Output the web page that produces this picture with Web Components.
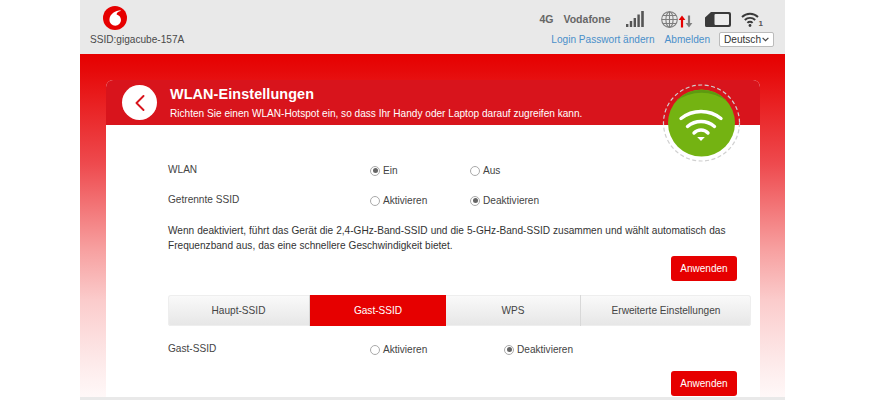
<!DOCTYPE html>
<html lang="de">
<head>
<meta charset="utf-8">
<title>WLAN-Einstellungen</title>
<style>
html,body{margin:0;height:400px;overflow:hidden;background:#fff}
body{font-family:"Liberation Sans",Arial,sans-serif;color:#444}
</style>
</head>
<body>
<gc-page>
  <gc-topbar slot="top" ssid="SSID:gigacube-157A"></gc-topbar>
  <gc-panel title-text="WLAN-Einstellungen" sub-text="Richten Sie einen WLAN-Hotspot ein, so dass Ihr Handy oder Laptop darauf zugreifen kann.">
    <gc-row label="WLAN" style="--row-h:30px">
      <gc-radio checked>Ein</gc-radio>
      <gc-radio>Aus</gc-radio>
    </gc-row>
    <gc-row label="Getrennte SSID" style="--row-h:30px">
      <gc-radio>Aktivieren</gc-radio>
      <gc-radio checked>Deaktivieren</gc-radio>
    </gc-row>
    <gc-note>Wenn deaktiviert, führt das Gerät die 2,4-GHz-Band-SSID und die 5-GHz-Band-SSID zusammen und wählt automatisch das Frequenzband aus, das eine schnellere Geschwindigkeit bietet.</gc-note>
    <gc-apply style="margin-top:3px">Anwenden</gc-apply>
    <gc-tabs style="margin-top:14px"></gc-tabs>
    <gc-row label="Gast-SSID" style="--row-h:29px;--col:134px;margin-top:16px">
      <gc-radio>Aktivieren</gc-radio>
      <gc-radio checked>Deaktivieren</gc-radio>
    </gc-row>
    <gc-apply>Anwenden</gc-apply>
  </gc-panel>
</gc-page>

<script>
class GcPage extends HTMLElement {
    connectedCallback() {
        this.attachShadow({ mode: 'open' });
        this.shadowRoot.innerHTML = `
            <style>
                :host{display:block;width:705px;margin-left:80px;height:400px;overflow:hidden;background:#e9e9e9}
                .body{height:343px;padding:26px 25px 0 26px;box-sizing:border-box;overflow:hidden;
                    background:linear-gradient(#e60000 0,#e60a0a 5%,#ee4a4e 32%,#f7a0a0 57%,#fbcccc 72%,#fdeaea 90%,#fff8f8 100%)}
            </style>
            <slot name="top"></slot>
            <div class="body"><slot></slot></div>
        `;
    }
}
customElements.define('gc-page', GcPage);

class GcTopbar extends HTMLElement {
    connectedCallback() {
        this.attachShadow({ mode: 'open' });
        this.shadowRoot.innerHTML = `
            <style>
                :host{display:flex;justify-content:space-between;height:54px;font-size:10px;color:#555;box-sizing:border-box}
                .brand{display:flex;flex-direction:column;align-items:flex-start;padding:6px 0 0 10px}
                .brand svg{margin-left:13px;display:block}
                .ssid{margin-top:3px;font-size:10.1px;line-height:13px;color:#4a4a4a}
                .right{display:flex;flex-direction:column;align-items:flex-end;padding:9px 11px 0 0}
                .status{display:flex;align-items:center;height:20px;padding-right:12px;font-weight:bold;color:#666;font-size:10.5px}
                .status svg{display:block}
                .one{font-size:8px;color:#555;align-self:flex-end;margin:0 -1px 0 0;line-height:8px;padding-bottom:1px}
                .links{display:flex;align-items:center;margin-top:3px;color:#4a8fc9;font-size:10.1px}
                .select{display:flex;align-items:center;justify-content:space-between;margin-left:9px;width:55px;height:15px;box-sizing:border-box;border:1px solid #bbb;border-radius:2px;background:#fff;color:#333;padding:0 4px}
            </style>
            <div class="brand">
                <svg width="24" height="24" viewBox="0 0 24 24">
                    <circle cx="12" cy="12" r="12" fill="#e60000"/>
                    <path d="M17.6 4.2C13 4.400 6.400 7.600 6.400 14a5.800 5.800 0 0 0 11.600 0c0-3.200-2.200-5-4.400-5.600 0-1.600 1.700-3 4-3.400z" fill="#fff"/>
                </svg>
                <div class="ssid">${this.getAttribute('ssid')}</div>
            </div>
            <div class="right">
                <div class="status">
                    <span>4G</span><span style="margin-left:10px">Vodafone</span>
                    <svg style="margin-left:15px" width="18" height="18" viewBox="0 0 18 18" fill="#555">
                        <rect x="0" y="14" width="2.4" height="3"/><rect x="3.8" y="11" width="2.4" height="6"/><rect x="7.6" y="8" width="2.4" height="9"/><rect x="11.4" y="4.5" width="2.4" height="12.5"/><rect x="15.2" y="1" width="2.6" height="16"/>
                    </svg>
                    <svg style="margin-left:17px" width="17" height="17" viewBox="0 0 17 17" fill="none" stroke="#7d7d7d" stroke-width="1.1">
                        <circle cx="8.5" cy="8.5" r="7.8"/><ellipse cx="8.5" cy="8.5" rx="3.6" ry="7.8"/><path d="M8.5.8v15.4M.8 8.500h15.400M2 4.500h13M2 12.500h13"/>
                    </svg>
                    <svg style="margin-left:0;margin-top:5px" width="15" height="13" viewBox="0 0 15 13">
                        <path d="M4 12.5V4" stroke="#e60000" stroke-width="2.2"/><path d="M.6 5 4 .5 7.4 5z" fill="#e60000"/>
                        <path d="M11 .5V9" stroke="#808080" stroke-width="2.2"/><path d="M7.600 8 11 12.500 14.400 8z" fill="#808080"/>
                    </svg>
                    <svg style="margin-left:12px" width="26" height="15" viewBox="0 0 26 15">
                        <path d="M6 0H24a2 2 0 0 1 2 2V13a2 2 0 0 1-2 2H1.500A1.500 1.500 0 0 1 0 13.500V5.500z" fill="#3a3a3a"/>
                        <rect x="9.5" y="2" width="14.5" height="11" rx="1" fill="#ececec"/>
                    </svg>
                    <svg style="margin-left:10px" width="18" height="15" viewBox="0 0 18 15" fill="none" stroke="#3a3a3a" stroke-width="1.9">
                        <path d="M1 5a11.500 11.500 0 0 1 16 0M3.800 8a7.500 7.500 0 0 1 10.400 0M6.400 10.800a3.600 3.600 0 0 1 5.200 0"/>
                        <circle cx="9" cy="13.5" r="1.4" fill="#3a3a3a" stroke="none"/>
                    </svg>
                    <span class="one">1</span>
                </div>
                <div class="links">
                    <span>Login Passwort ändern</span><span style="margin-left:10px">Abmelden</span>
                    <div class="select"><span>Deutsch</span>
                        <svg width="7" height="5" viewBox="0 0 7 5" fill="none" stroke="#444" stroke-width="1.2"><path d="M.6.8 3.500 3.700 6.400.8"/></svg>
                    </div>
                </div>
            </div>
        `;
    }
}
customElements.define('gc-topbar', GcTopbar);

class GcPanel extends HTMLElement {
    connectedCallback() {
        this.attachShadow({ mode: 'open' });
        this.shadowRoot.innerHTML = `
            <style>
                :host{display:block;position:relative;height:317px;background:#fff;border-radius:7px 7px 0 0}
                .head{display:flex;align-items:center;height:45px;padding-left:16px;background:#d8141c;border-radius:7px 7px 0 0;color:#fff}
                .back{flex:none;width:35px;height:35px;border-radius:50%;background:#fff;display:flex;align-items:center;justify-content:center}
                .txt{margin-left:13px}
                h1{margin:0;font-size:14.4px;line-height:18px;font-weight:bold;letter-spacing:.1px}
                p{margin:4px 0 0;font-size:10.1px;line-height:13px}
                .content{padding:38px 9px 0 62px}
                .badge{position:absolute;left:555px;top:3px}
            </style>
            <div class="head">
                <div class="back">
                    <svg width="10" height="16" viewBox="0 0 10 16" fill="none" stroke="#d8141c" stroke-width="1.9" stroke-linecap="round" stroke-linejoin="round"><path d="M8.500 1 1.500 8l7 7"/></svg>
                </div>
                <div class="txt">
                    <h1>${this.getAttribute('title-text')}</h1>
                    <p>${this.getAttribute('sub-text')}</p>
                </div>
            </div>
            <div class="content"><slot></slot></div>
            <svg class="badge" width="80" height="80" viewBox="0 0 80 80" fill="none">
                <circle cx="40.5" cy="40" r="38" fill="none" stroke="#d0d0d0" stroke-width="1.2" stroke-dasharray="4 2.5"/>
                <circle cx="40.5" cy="40" r="33.5" fill="#74b312"/>
                <path d="M15 18.500a33.500 33.500 0 0 1 51 0 38 33.500 0 0 0-51 0" fill="#5d9a10"/>
                <g stroke="#fff" stroke-width="3.4" fill="none" stroke-linecap="round">
                    <path d="M20 35.500a32 32 0 0 1 40 0"/>
                    <path d="M26.500 43.500a20.700 20.700 0 0 1 27 0"/>
                    <path d="M33 50a9.700 9.700 0 0 1 14 0"/>
                </g>
                <path d="M36.200 54h7.600L40 58z" fill="#fff"/>
            </svg>
        `;
    }
}
customElements.define('gc-panel', GcPanel);

class GcRow extends HTMLElement {
    connectedCallback() {
        this.attachShadow({ mode: 'open' });
        this.shadowRoot.innerHTML = `
            <style>
                :host{display:flex;align-items:flex-start;height:var(--row-h,30px);font-size:10.1px;line-height:13px;color:#444}
                .label{width:202px;flex:none}
                .opts{display:grid;grid-template-columns:var(--col,100px) auto;padding-top:1px}
            </style>
            <div class="label">${this.getAttribute('label')}</div>
            <div class="opts"><slot></slot></div>
        `;
    }
}
customElements.define('gc-row', GcRow);

class GcRadio extends HTMLElement {
    connectedCallback() {
        const on = this.hasAttribute('checked');
        this.attachShadow({ mode: 'open' });
        this.shadowRoot.innerHTML = `
            <style>
                :host{display:inline-flex;align-items:center;font-size:10.1px;line-height:13px;color:#444}
                .dot{width:8px;height:8px;border:1px solid #aaa;border-radius:50%;margin-right:3px;display:flex;align-items:center;justify-content:center;background:#fff}
                .dot i{display:${on ? 'block' : 'none'};width:5px;height:5px;border-radius:50%;background:#666}
            </style>
            <span class="dot"><i></i></span><slot></slot>
        `;
    }
}
customElements.define('gc-radio', GcRadio);

class GcNote extends HTMLElement {
    connectedCallback() {
        this.attachShadow({ mode: 'open' });
        this.shadowRoot.innerHTML = `
            <style>:host{display:block;font-size:10.1px;line-height:15px;color:#333;word-spacing:.2px}</style>
            <slot></slot>
        `;
    }
}
customElements.define('gc-note', GcNote);

class GcApply extends HTMLElement {
    connectedCallback() {
        this.attachShadow({ mode: 'open' });
        this.shadowRoot.innerHTML = `
            <style>
                :host{display:flex;justify-content:flex-end;padding-right:14px}
                button{width:66px;height:25px;border:0;border-radius:3px;background:#e60000;color:#fff;font:10px "Liberation Sans",Arial,sans-serif;padding:0}
            </style>
            <button><slot></slot></button>
        `;
    }
}
customElements.define('gc-apply', GcApply);

class GcTabs extends HTMLElement {
    connectedCallback() {
        const tabs = [['Haupt-SSID', 142], ['Gast-SSID', 136], ['WPS', 135], ['Erweiterte Einstellungen', 170]];
        this.attachShadow({ mode: 'open' });
        this.shadowRoot.innerHTML = `
            <style>
                :host{display:flex;height:31px;border-radius:3px;font-size:10.1px;color:#444;background:linear-gradient(#fafafa,#e6e6e6);overflow:hidden;box-shadow:inset 0 0 0 1px #eee}
                div{display:flex;align-items:center;justify-content:center;box-sizing:border-box;border-right:1px solid #d8d8d8}
                div:last-child{border-right:0}
                .on{background:#e60000;color:#fff;border-right:0}
            </style>
            ${tabs.map(([t, w], i) => `<div class="${i === 1 ? 'on' : ''}" style="width:${w}px">${t}</div>`).join('')}
        `;
    }
}
customElements.define('gc-tabs', GcTabs);
</script>
</body>
</html>
